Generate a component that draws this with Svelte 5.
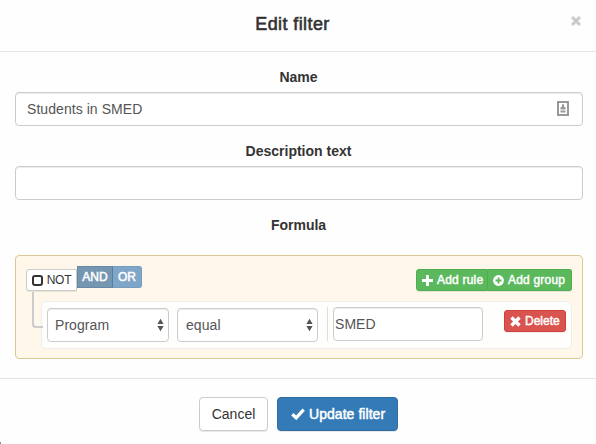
<script>
  let name = $state('Students in SMED');
  let description = $state('');
  let value = $state('SMED');
</script>

{#snippet arrows()}
  <svg class="arrows" width="7" height="14" viewBox="0 0 7 14"><path d="M3.5 .7 6.6 6H.4zM.4 8h6.2L3.5 13.3z" /></svg>
{/snippet}

<div class="modal">
  <header>
    <h4>Edit filter</h4>
    <button class="close" aria-label="Close">
      <svg width="10" height="10" viewBox="0 0 10 10"><path d="M1 1l8 8M9 1L1 9" /></svg>
    </button>
  </header>

  <main>
    <label for="name">Name</label>
    <div class="field">
      <input id="name" bind:value={name} />
      <svg class="contact" width="12" height="15" viewBox="0 0 12 15">
        <rect x="1" y="1" width="10" height="13" fill="#fff" stroke="#8e8e8e" stroke-width="1.8" />
        <path d="M5 3.200h2v2.200l1.500 1.200v1.900h-5V6.600L5 5.400zM3.500 9.500h5v2h-5z" fill="#999" />
      </svg>
    </div>
    <label for="desc" class="desc">Description text</label>
    <div class="field"><input id="desc" bind:value={description} /></div>
    <div class="label formula">Formula</div>

    <section class="group">
      <div class="group-head">
        <div class="conditions">
          <button class="not"><i></i><span>NOT</span></button>
          <button class="and"><span>AND</span></button>
          <button class="or"><span>OR</span></button>
        </div>
        <div class="actions">
          <button class="add rule-btn">
            <svg width="11" height="11" viewBox="0 0 11 11"><path d="M4 0h3v4h4v3H7v4H4V7H0V4h4z" fill="#fff" /></svg><span>Add rule</span>
          </button>
          <button class="add group-btn">
            <svg width="11" height="11" viewBox="0 0 12 12"><circle cx="6" cy="6" r="5.900" fill="#fff" /><path d="M5 2.800h2V5h2.200v2H7v2.200H5V7H2.800V5H5z" fill="#5cb85c" /></svg><span>Add group</span>
          </button>
        </div>
      </div>
      <div class="rule">
        <div class="select program"><span>Program</span>{@render arrows()}</div>
        <div class="select operator"><span>equal</span>{@render arrows()}</div>
        <div class="value"><input aria-label="Value" bind:value /></div>
        <button class="delete">
          <svg width="11" height="11" viewBox="0 0 11 11"><path d="M1.500 1.500l8 8M9.500 1.500l-8 8" stroke="#fff" stroke-width="3.400" /></svg><span>Delete</span>
        </button>
      </div>
    </section>
  </main>

  <footer>
    <button class="cancel"><span>Cancel</span></button>
    <button class="update">
      <svg width="14" height="12" viewBox="0 0 14 12"><path d="M1.300 6.300l3.900 3.500L12.700 1.600" fill="none" stroke="#fff" stroke-width="3.300" /></svg><span>Update filter</span>
    </button>
  </footer>
  <i class="corner"></i>
</div>

<style>
  :global(body) { margin: 0; background: #fff; overflow: hidden; }
  * { box-sizing: border-box; }
  .modal {
    position: relative; width: 596px; height: 444px; background: #fefefe; overflow: hidden;
    font: 14px/20px "Liberation Sans", Arial, sans-serif; color: #333;
  }
  button { font: inherit; margin: 0; padding: 0; display: flex; align-items: center; border: 1px solid; white-space: nowrap; }
  svg { display: block; flex: none; }
  header { height: 52px; border-bottom: 1px solid #e5e5e5; display: flex; padding: 14px 11px 0 0; justify-content: center; }
  h4 { margin: 0; font-size: 18px; line-height: 20px; font-weight: 400; -webkit-text-stroke: .6px #333; letter-spacing: .4px; }
  .close { position: absolute; right: 15px; top: 16px; border: 0; background: none; width: 10px; height: 10px; }
  .close path { stroke: #c9c9c9; stroke-width: 2.900; }
  main { height: 326px; padding: 15px 13px 0 15px; }
  label, .label { display: block; height: 25px; padding-right: 1px; text-align: center; font-weight: 700; }
  .desc, .formula { margin-top: 15px; }
  .field { position: relative; }
  input {
    display: block; width: 100%; height: 34px; padding: 0 11px; font: 14px/20px "Liberation Sans", Arial, sans-serif; letter-spacing: .06px;
    border: 1px solid #ccc; border-radius: 4px; outline: 0; background: #fff; color: #555; box-shadow: inset 0 1px 1px rgba(0,0,0,.075);
  }
  .contact { position: absolute; right: 14px; top: 9px; }
  .group { margin-top: 15px; height: 104px; padding: 10px; border: 1px solid #dcc896; border-radius: 4px; background: #fef7ea; }
  .group-head { display: flex; justify-content: space-between; font-size: 12px; line-height: 18px; }
  .conditions, .actions { display: flex; }
  .conditions button { height: 22px; justify-content: center; }
  .conditions .not { width: 51px; margin-top: 3px; background: #fff; border-color: #ccc; border-radius: 3px 0 0 3px; color: #333; gap: 4px; box-shadow: 0 1px 0 rgba(0,0,0,.08); }
  .not span { letter-spacing: -.2px; }
  .not i { width: 11px; height: 11px; border: 2px solid #333; border-radius: 3px; }
  .and, .or { color: #fff; -webkit-text-stroke: .5px #fff; }
  .and { width: 36px; background: #7596b1; border-color: #6588a6; border-right-color: #557ea2; }
  .or { width: 29px; background: #7fa5c9; border-color: #759dc2; border-left: 0; border-radius: 0 3px 3px 0; }
  .actions { margin-top: 3px; color: #fff; }
  .add { height: 22px; background: #5cb85c; border-color: #4cae4c; color: #fff; -webkit-text-stroke: .45px #fff; padding-left: 5px; gap: 4px; letter-spacing: .2px; box-shadow: 0 1px 0 rgba(0,0,0,.08); }
  .rule-btn { width: 72px; border-radius: 3px 0 0 3px; }
  .group-btn { width: 84px; border-left: 0; border-radius: 0 3px 3px 0; }
  .rule {
    position: relative; display: flex; align-items: flex-start; height: 48px; margin: 10px 0 0 15px; padding: 5px;
    border: 1px solid #eee; border-radius: 5px; background: #fefefd;
  }
  .rule::before {
    content: ''; position: absolute; left: -10px; top: -10px; width: 9px; height: 34px;
    border: solid #ccc; border-width: 0 0 2px 2px; border-bottom-left-radius: 4px;
  }
  .select {
    display: flex; align-items: center; justify-content: space-between; height: 34px; margin-top: 1px; padding: 0 4px 0 7px;
    border: 1px solid #ccc; border-radius: 4px; background: #fff; color: #555; box-shadow: inset 0 1px 1px rgba(0,0,0,.075); letter-spacing: .06px;
  }
  .arrows { fill: #555; }
  .program { width: 122px; }
  .operator { width: 141px; margin-left: 8px; padding-left: 8px; }
  .value { margin-left: 9px; padding-left: 5px; border-left: 1px solid #ddd; }
  .value input { width: 150px; padding: 0 1px; }
  .delete {
    width: 62px; height: 22px; margin: 3px 0 0 auto; padding-left: 5px; gap: 4px; font-size: 12px;
    background: #d9534f; border-color: #d43f3a; border-radius: 3px; color: #fff; -webkit-text-stroke: .45px #fff; box-shadow: 0 1px 0 rgba(0,0,0,.05);
  }
  footer { height: 66px; border-top: 1px solid #e5e5e5; padding: 18px 0 0 199px; display: flex; gap: 9px; }
  footer button { height: 34px; border-radius: 4px; box-shadow: 0 1px 0 rgba(0,0,0,.09); }
  .cancel { width: 69px; justify-content: center; background: #fff; border-color: #ccc; color: #333; }
  .update { width: 121px; padding-left: 13px; gap: 4px; background: #337ab7; border-color: #2e6da4; color: #fff; -webkit-text-stroke: .5px #fff; letter-spacing: .05px; }
  .corner { position: absolute; left: 0; bottom: 0; width: 1px; height: 2px; background: #888; }
</style>
